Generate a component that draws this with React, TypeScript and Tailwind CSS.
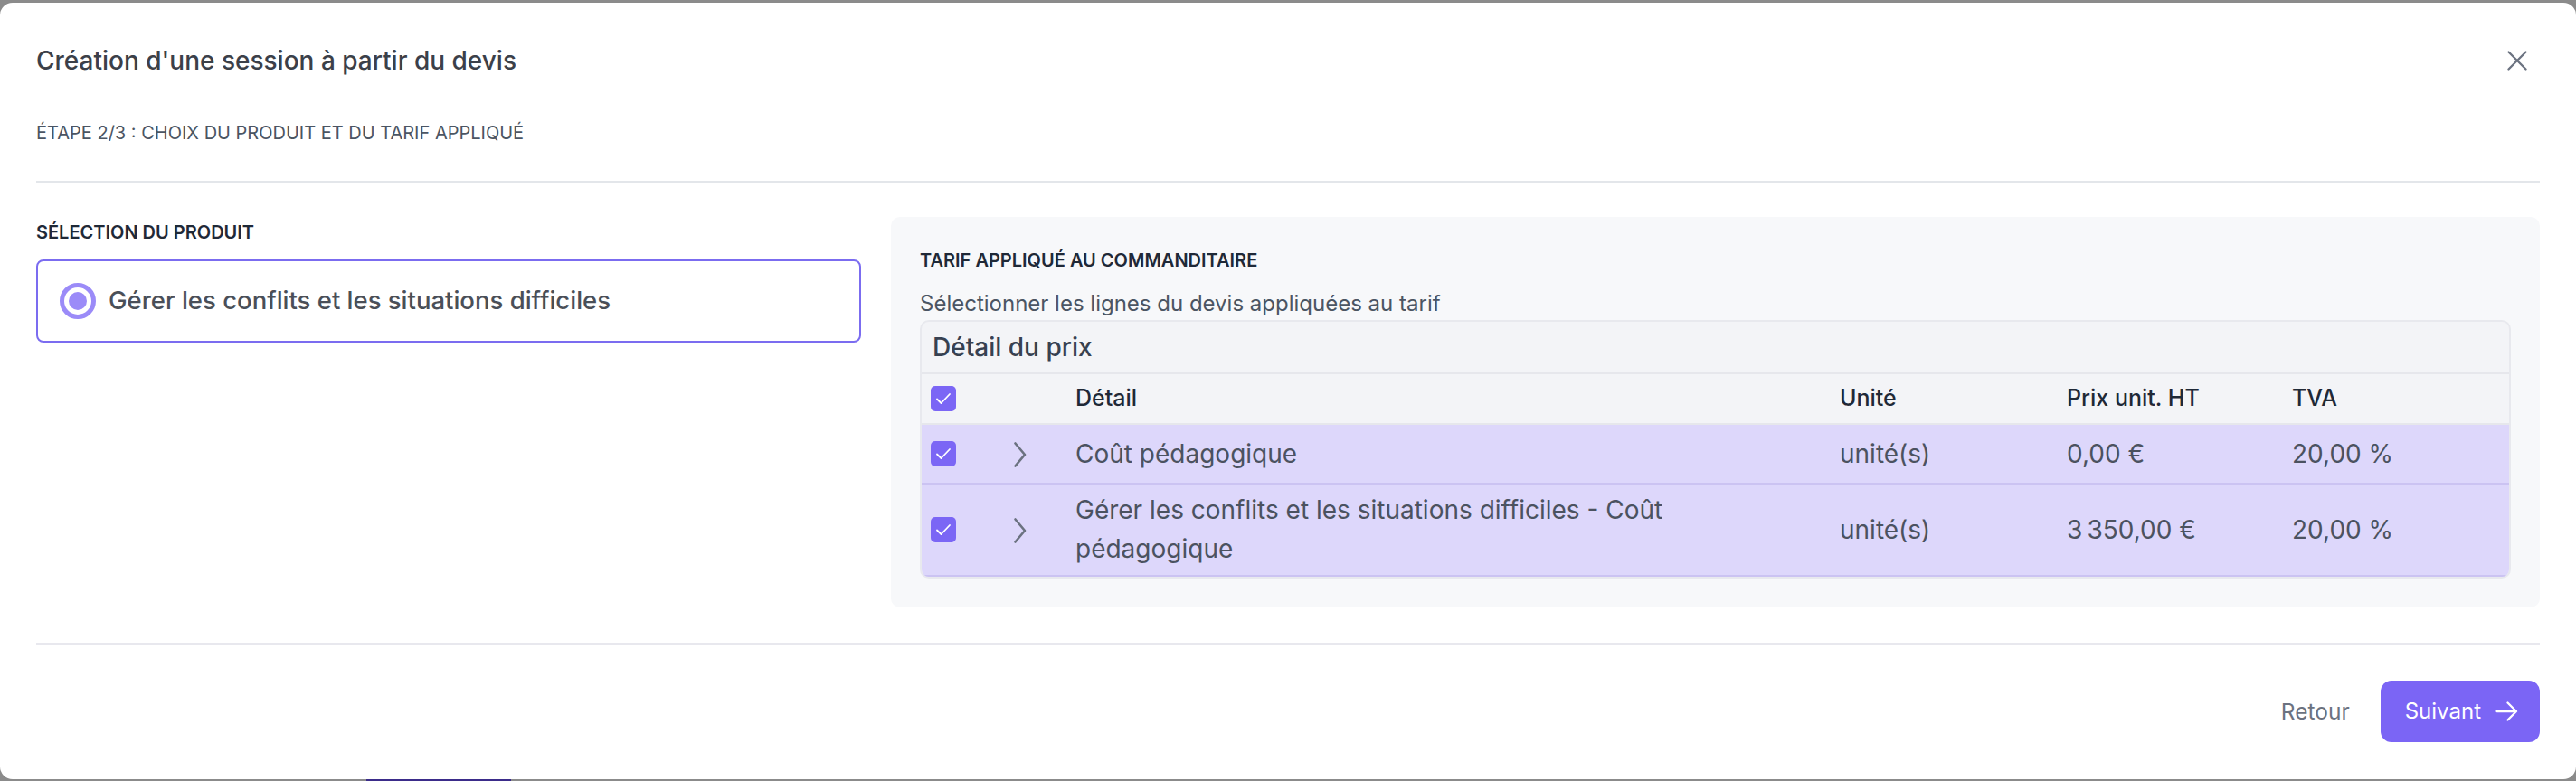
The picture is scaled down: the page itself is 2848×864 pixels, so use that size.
import React from "react";

const rows = [
  { label: "Coût pédagogique", unit: "unité(s)", price: "0,00\u00a0€", tva: "20,00\u00a0%" },
  {
    label: "Gérer les conflits et les situations difficiles - Coût pédagogique",
    unit: "unité(s)",
    price: "3\u202f350,00\u00a0€",
    tva: "20,00\u00a0%",
  },
];

const CheckBox = () => (
  <span className="flex h-[28px] w-[28px] items-center justify-center rounded-[5px] bg-[#7b66f5]">
    <svg width="18" height="14" viewBox="0 0 18 14" fill="none">
      <path d="M2 7.5 L6.5 12 L16 2" stroke="white" strokeWidth="1.8" strokeLinecap="round" strokeLinejoin="round" />
    </svg>
  </span>
);

const Chevron = () => (
  <svg width="16" height="30" viewBox="0 0 16 30" fill="none">
    <path d="M2.5 2.5 L13 15 L2.5 27.5" stroke="#6b7280" strokeWidth="2.6" strokeLinecap="round" strokeLinejoin="round" />
  </svg>
);

export default function App() {
  return (
    <div
      className="relative h-[864px] w-[2848px] overflow-hidden bg-[#8b8b8b] pt-[3px]"
      style={{ fontFamily: "Inter, 'Noto Sans', sans-serif" }}
    >
      {/* bit of the page behind the backdrop */}
      <div className="absolute bottom-0 left-[405px] h-[12px] w-[160px] rounded-t-[6px] bg-[#3b2c8a]" />

      <div className="relative flex h-[859px] flex-col rounded-[14px] bg-white px-[40px]">
        {/* header */}
        <div className="flex items-center justify-between pt-[44px]">
          <h2 className="text-[28px] font-medium leading-[40px] text-[#3b4049]">
            Création d'une session à partir du devis
          </h2>
          <button aria-label="Fermer" className="mr-[13px] flex h-[24px] w-[24px] items-center justify-center">
            <svg width="22" height="22" viewBox="0 0 22 22" fill="none">
              <path d="M1.5 1.5 L20.5 20.5 M20.5 1.5 L1.5 20.5" stroke="#6b7280" strokeWidth="2.3" strokeLinecap="round" />
            </svg>
          </button>
        </div>
        <p className="mt-[48px] text-[20px] leading-[24px] text-[#4b5563]">
          ÉTAPE 2/3 : CHOIX DU PRODUIT ET DU TARIF APPLIQUÉ
        </p>
        <div className="mt-[41px] border-b-2 border-[#e3e6ea]" />

        {/* body */}
        <div className="mt-[38px] grid grid-cols-[912px_1fr] gap-[33px]">
          <div className="pt-[5px]">
            <h3 className="text-[20px] font-semibold leading-[24px] text-[#1f2937]">SÉLECTION DU PRODUIT</h3>
            <div className="mt-[18px] flex h-[92px] items-center gap-[14px] rounded-[8px] border-2 border-[#7b6cf0] pl-[24px]">
              <span className="flex h-[40px] w-[40px] items-center justify-center rounded-full border-[5px] border-[#9b8bf8] bg-white">
                <span className="h-[20px] w-[20px] rounded-full bg-[#9b8bf8]" />
              </span>
              <span className="text-[27.5px] font-medium text-[#4a4f58]">
                Gérer les conflits et les situations difficiles
              </span>
            </div>
          </div>

          <div className="rounded-[10px] bg-[#f7f8fa] px-[32px] pb-[32px] pt-[36px]">
            <h3 className="text-[20px] font-semibold leading-[24px] text-[#1f2937]">TARIF APPLIQUÉ AU COMMANDITAIRE</h3>
            <p className="mt-[18px] text-[24px] leading-[36px] text-[#4b5563]">
              Sélectionner les lignes du devis appliquées au tarif
            </p>
            <div className="overflow-hidden rounded-[10px] border-2 border-[#e8e9ee] bg-[#f3f4f7]">
              <div className="flex h-[58px] items-center border-b-2 border-[#e6e7ec] pl-[12px] text-[28px] font-medium text-[#374151]">
                Détail du prix
              </div>
              <div className="grid h-[56px] grid-cols-[89px_81px_845px_251px_249px_1fr] items-center border-b-2 border-[#e6e7ec] text-[25px] font-medium text-[#1f2937]">
                <div className="pl-[10px]">
                  <CheckBox />
                </div>
                <div />
                <div>Détail</div>
                <div>Unité</div>
                <div>Prix unit. HT</div>
                <div>TVA</div>
              </div>
              {rows.map((row, i) => (
                <div
                  key={i}
                  className={`grid grid-cols-[89px_81px_845px_251px_249px_1fr] items-center border-b-2 border-[#cbc3f2] bg-[#ddd7fb] text-[28px] leading-[43px] text-[#4b5260] ${
                    i === 0 ? "h-[66px]" : "py-[7px]"
                  }`}
                >
                  <div className="pl-[10px]">
                    <CheckBox />
                  </div>
                  <div className="pl-[12px] pt-[2px]">
                    <Chevron />
                  </div>
                  <div className="pr-[48px]">{row.label}</div>
                  <div>{row.unit}</div>
                  <div>{row.price}</div>
                  <div>{row.tva}</div>
                </div>
              ))}
            </div>
          </div>
        </div>

        {/* footer */}
        <div className="mt-[39px] border-b-2 border-[#e8e8ee]" />
        <div className="mt-[40px] flex items-center justify-end gap-[10px]">
          <button className="px-[24px] text-[24.5px] leading-[68px] text-[#6b7280]">Retour</button>
          <button className="flex h-[68px] items-center gap-[16px] rounded-[12px] bg-[#7b65f5] pl-[27px] pr-[24px] text-[24px] text-white">
            Suivant
            <svg width="25" height="22" viewBox="0 0 25 22" fill="none">
              <path d="M1.5 11 H23 M13.5 1.5 L23 11 L13.5 20.5" stroke="white" strokeWidth="2.3" strokeLinecap="round" strokeLinejoin="round" />
            </svg>
          </button>
        </div>
      </div>
    </div>
  );
}
